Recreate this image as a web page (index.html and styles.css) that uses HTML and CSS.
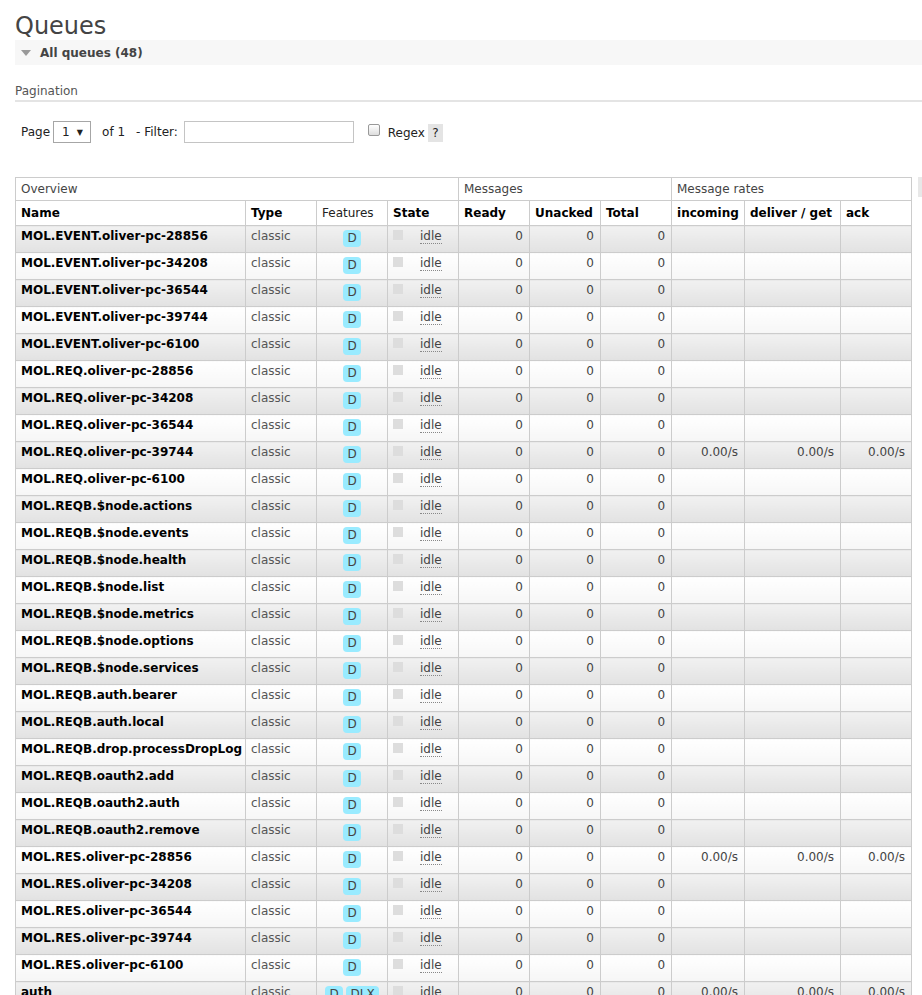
FILE: index.html
```html
<!DOCTYPE html>
<html>
<head>
<meta charset="utf-8">
<title>Queues</title>
<link rel="stylesheet" href="styles.css">
</head>
<body>
<div class="main">
  <h1 class="title">Queues</h1>
  <div class="section-head"><span class="tri"></span><span class="section-label">All queues (48)</span></div>
  <div class="pag-head">Pagination</div>
  <div class="pag-row">
    <span class="lbl-page">Page</span>
    <span class="select"><span>1</span><span class="arrow">▼</span></span>
    <span class="lbl-of">of 1</span>
    <span class="lbl-filter">- Filter:</span>
    <span class="input"></span>
    <span class="checkbox"></span>
    <span class="lbl-regex">Regex</span>
    <span class="help">?</span>
  </div>
  <div class="table-wrap">
    <table class="list">
      <colgroup>
        <col class="c-name"><col class="c-type"><col class="c-feat"><col class="c-state"><col class="c-ready"><col class="c-unacked"><col class="c-total"><col class="c-in"><col class="c-deliver"><col class="c-ack">
      </colgroup>
      <thead>
        <tr class="group">
          <th colspan="4">Overview</th>
          <th colspan="3">Messages</th>
          <th colspan="3">Message rates</th>
        </tr>
        <tr class="cols">
          <th>Name</th><th>Type</th><th class="plain">Features</th><th>State</th><th>Ready</th><th>Unacked</th><th>Total</th><th>incoming</th><th>deliver / get</th><th>ack</th>
        </tr>
      </thead>
      <tbody id="rows"></tbody>
    </table>
    <span class="plus-minus" title="Click to change columns"></span>
  </div>
</div>
<script src="app.js"></script>
</body>
</html>
```
FILE: app.js
```js
var names = [
  ["MOL.EVENT.oliver-pc-28856"],["MOL.EVENT.oliver-pc-34208"],["MOL.EVENT.oliver-pc-36544"],
  ["MOL.EVENT.oliver-pc-39744"],["MOL.EVENT.oliver-pc-6100"],["MOL.REQ.oliver-pc-28856"],
  ["MOL.REQ.oliver-pc-34208"],["MOL.REQ.oliver-pc-36544"],["MOL.REQ.oliver-pc-39744",1],
  ["MOL.REQ.oliver-pc-6100"],["MOL.REQB.$node.actions"],["MOL.REQB.$node.events"],
  ["MOL.REQB.$node.health"],["MOL.REQB.$node.list"],["MOL.REQB.$node.metrics"],
  ["MOL.REQB.$node.options"],["MOL.REQB.$node.services"],["MOL.REQB.auth.bearer"],
  ["MOL.REQB.auth.local"],["MOL.REQB.drop.processDropLog"],["MOL.REQB.oauth2.add"],
  ["MOL.REQB.oauth2.auth"],["MOL.REQB.oauth2.remove"],["MOL.RES.oliver-pc-28856",1],
  ["MOL.RES.oliver-pc-34208"],["MOL.RES.oliver-pc-36544"],["MOL.RES.oliver-pc-39744"],
  ["MOL.RES.oliver-pc-6100"],["auth",1,1]
];
var tb = document.getElementById("rows");
var html = "";
names.forEach(function (r, i) {
  var rate = r[1] ? "0.00/s" : "";
  var feats = '<abbr class="feat">D</abbr>' + (r[2] ? ' <abbr class="feat">DLX</abbr>' : "");
  html += '<tr class="' + (i % 2 === 0 ? "alt1" : "alt2") + '">' +
    '<td class="name">' + r[0] + '</td>' +
    '<td class="type">classic</td>' +
    '<td class="features">' + feats + '</td>' +
    '<td class="state"><span class="status"></span><abbr class="idle">idle</abbr></td>' +
    '<td class="num">0</td><td class="num">0</td><td class="num">0</td>' +
    '<td class="num">' + rate + '</td><td class="num">' + rate + '</td><td class="num">' + rate + '</td>' +
    '</tr>';
});
tb.innerHTML = html;
```
FILE: styles.css
```css
html, body {
  margin: 0;
  padding: 0;
  overflow: hidden;
  background: #fff;
}
body {
  font-family: "DejaVu Sans", Verdana, sans-serif;
  font-size: 12px;
  color: #444;
}
.main {
  padding-left: 15px;
}
.title {
  font-size: 24px;
  line-height: 28px;
  font-weight: normal;
  color: #444;
  margin: 12px 0 0 0;
}
.section-head {
  height: 25px;
  background: #f7f7f7;
  display: flex;
  align-items: center;
  width: 907px;
}
.tri {
  width: 0;
  height: 0;
  border-left: 5px solid transparent;
  border-right: 5px solid transparent;
  border-top: 6px solid #999;
  margin-left: 6px;
  margin-right: 9px;
}
.section-label {
  font-weight: bold;
  color: #444;
}
.pag-head {
  margin-top: 17px;
  height: 18px;
  line-height: 18px;
  border-bottom: 2px solid #e4e4e4;
  width: 907px;
  color: #555;
}
.pag-row {
  display: flex;
  align-items: center;
  margin-top: 19px;
  height: 22px;
  color: #222;
}
.lbl-page { margin-left: 6px; }
.select {
  margin-left: 3px;
  width: 38px;
  height: 22px;
  box-sizing: border-box;
  border: 1px solid #a6a6a6;
  display: flex;
  align-items: center;
  padding-left: 8px;
  gap: 7px;
  background: #fff;
}
.arrow { font-size: 8px; color: #222; }
.lbl-of { margin-left: 11px; }
.lbl-filter { margin-left: 11px; }
.input {
  margin-left: 6px;
  width: 170px;
  height: 22px;
  box-sizing: border-box;
  border: 1px solid #c4c4c4;
  background: #fff;
}
.checkbox {
  margin-left: 14px;
  width: 12px;
  height: 12px;
  box-sizing: border-box;
  border: 1px solid #999;
  border-radius: 2px;
  background: linear-gradient(#fff, #ddd);
  margin-top: -4px;
}
.lbl-regex { margin-left: 8px; margin-top: 2px; }
.help {
  margin-left: 3px;
  width: 15px;
  height: 18px;
  background: #e4e4e4;
  display: flex;
  align-items: center;
  justify-content: center;
  margin-top: 1px;
}
.table-wrap {
  display: flex;
  align-items: flex-start;
  margin-top: 34px;
  width: 920px;
}
table.list {
  border-collapse: collapse;
  table-layout: fixed;
  width: 896px;
  flex: none;
}
.c-name { width: 230px; }
.c-type, .c-feat, .c-state, .c-ready, .c-unacked, .c-total, .c-ack { width: 71px; }
.c-in { width: 73px; }
.c-deliver { width: 96px; }
table.list th, table.list td {
  border: 1px solid #ccc;
  text-align: left;
  white-space: nowrap;
  overflow: hidden;
}
tr.group th {
  font-weight: normal;
  height: 22px;
  padding: 0 5px;
  color: #444;
  background: #fff;
}
tr.cols th {
  font-weight: bold;
  height: 24px;
  padding: 0 5px;
  color: #000;
  background: #fff;
}
tr.cols th.plain { font-weight: normal; color: #222; }
table.list td {
  height: 27px;
  padding: 3px 5px 0 5px;
  vertical-align: top;
  line-height: 15px;
  box-sizing: border-box;
}
tr.alt1 td { background: linear-gradient(#f1f1f1, #e2e2e2); }
tr.alt2 td { background: linear-gradient(#fff, #f6f6f6); }
td.name { font-weight: bold; color: #000; }
td.type { color: #555; }
td.features { text-align: center !important; padding-top: 4px !important; }
.feat {
  display: inline-block;
  background: #99ebff;
  color: #444;
  border-radius: 4px;
  padding: 1px 4px;
  line-height: 15px;
  text-decoration: none;
}
td.state { color: #444; }
.status {
  display: inline-block;
  width: 10px;
  height: 10px;
  background: #ddd;
  margin: 1px 17px 0 0;
  vertical-align: top;
}
.idle {
  text-decoration: none;
  border-bottom: 1px dotted #888;
  color: #444;
}
td.num { text-align: right !important; padding-right: 6px !important; color: #444; }
.plus-minus {
  margin-left: 6px;
  width: 18px;
  height: 20px;
  background: #e8e8e8;
  flex: none;
}
```
